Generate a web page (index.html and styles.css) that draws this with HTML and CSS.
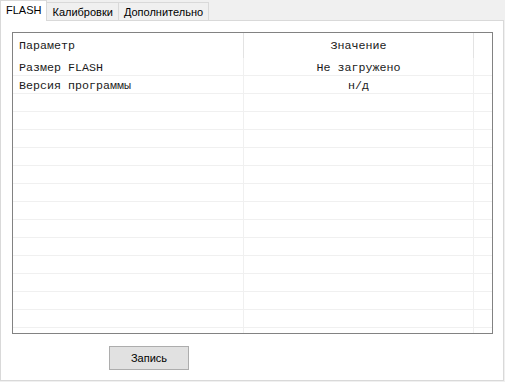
FILE: index.html
```html
<!DOCTYPE html>
<html lang="ru">
<head>
   <meta charset="UTF-8">
   <meta name="viewport" content="width=device-width, initial-scale=1.0">
   <title>FLASH</title>

   <link rel="stylesheet" href="styles.css">
</head>
<body>
   <div class="tabs">
      <div class="tabs__strip">
        <div class="tab tab--active">FLASH</div>
        <div class="tab">Калибровки</div>
        <div class="tab">Дополнительно</div>
      </div>
      <div class="tabs__panel">
        <div class="grid">
          <div class="grid__row grid__row--head">
            <div class="cell cell--name">Параметр</div>
            <div class="cell cell--value">Значение</div>
            <div class="cell cell--rest"></div>
          </div>
          <div class="grid__row">
            <div class="cell cell--name">Размер FLASH</div>
            <div class="cell cell--value">Не загружено</div>
            <div class="cell cell--rest"></div>
          </div>
          <div class="grid__row">
            <div class="cell cell--name">Версия программы</div>
            <div class="cell cell--value">н/д</div>
            <div class="cell cell--rest"></div>
          </div>
          <div class="grid__row"><div class="cell cell--name"></div><div class="cell cell--value"></div><div class="cell cell--rest"></div></div>
          <div class="grid__row"><div class="cell cell--name"></div><div class="cell cell--value"></div><div class="cell cell--rest"></div></div>
          <div class="grid__row"><div class="cell cell--name"></div><div class="cell cell--value"></div><div class="cell cell--rest"></div></div>
          <div class="grid__row"><div class="cell cell--name"></div><div class="cell cell--value"></div><div class="cell cell--rest"></div></div>
          <div class="grid__row"><div class="cell cell--name"></div><div class="cell cell--value"></div><div class="cell cell--rest"></div></div>
          <div class="grid__row"><div class="cell cell--name"></div><div class="cell cell--value"></div><div class="cell cell--rest"></div></div>
          <div class="grid__row"><div class="cell cell--name"></div><div class="cell cell--value"></div><div class="cell cell--rest"></div></div>
          <div class="grid__row"><div class="cell cell--name"></div><div class="cell cell--value"></div><div class="cell cell--rest"></div></div>
          <div class="grid__row"><div class="cell cell--name"></div><div class="cell cell--value"></div><div class="cell cell--rest"></div></div>
          <div class="grid__row"><div class="cell cell--name"></div><div class="cell cell--value"></div><div class="cell cell--rest"></div></div>
          <div class="grid__row"><div class="cell cell--name"></div><div class="cell cell--value"></div><div class="cell cell--rest"></div></div>
          <div class="grid__row"><div class="cell cell--name"></div><div class="cell cell--value"></div><div class="cell cell--rest"></div></div>
          <div class="grid__row"><div class="cell cell--name"></div><div class="cell cell--value"></div><div class="cell cell--rest"></div></div>
          <div class="grid__row grid__row--fill"><div class="cell cell--name"></div><div class="cell cell--value"></div><div class="cell cell--rest"></div></div>
        </div>
        <div class="actions">
          <button class="button">Запись</button>
        </div>
      </div>
   </div>
</body>
</html>
```

FILE: styles.css
```css
* {
  margin: 0;
  padding: 0;
  box-sizing: border-box;
}

body {
  background: #f0f0f0;
  font-family: "Liberation Sans", Arial, sans-serif;
  font-size: 11px;
  color: #000;
}

/* Tabs */

.tabs {
  width: 504px;
}

.tabs__strip {
  display: flex;
  align-items: flex-end;
  height: 20px;
}

.tab {
  height: 18px;
  line-height: 19px;
  padding: 0 5px;
  background: #f0f0f0;
  border: 1px solid #d9d9d9;
  border-bottom: none;
  border-left: none;
}

.tab--active {
  position: relative;
  z-index: 1;
  height: 21px;
  margin-bottom: -1px;
  line-height: 19px;
  padding: 0 5px;
  background: #fff;
  border-left: 1px solid #d9d9d9;
}

.tabs__panel {
  height: 361px;
  padding: 11px 11px 0 11px;
  background: #fff;
  border: 1px solid #d9d9d9;
}

/* Grid */

.grid {
  display: flex;
  flex-direction: column;
  width: 481px;
  height: 302px;
  border: 1px solid #828282;
  font-family: "Liberation Mono", "Courier New", monospace;
  font-size: 11.67px;
  color: #1a1a1a;
}

.grid__row {
  display: flex;
  height: 18px;
  border-bottom: 1px solid #f0f0f0;
}

.grid__row--head {
  height: 25px;
  border-bottom: none;
}

.grid__row--head .cell {
  padding-top: 0;
  line-height: 27px;
  border-right-color: #e3e3e3;
}

.grid__row--fill {
  flex: 1;
  border-bottom: none;
}

.cell {
  padding-top: 3px;
  line-height: 15px;
  white-space: nowrap;
  border-right: 1px solid #f0f0f0;
}

.cell--name {
  width: 231px;
  padding-left: 6px;
}

.cell--value {
  width: 230px;
  text-align: center;
}

.cell--rest {
  flex: 1;
  border-right: none;
}

/* Button */

.actions {
  padding: 12px 0 0 97px;
}

.button {
  width: 80px;
  height: 24px;
  background: #e1e1e1;
  border: 1px solid #adadad;
  font-family: "Liberation Sans", Arial, sans-serif;
  font-size: 11px;
  color: #000;
}
```
